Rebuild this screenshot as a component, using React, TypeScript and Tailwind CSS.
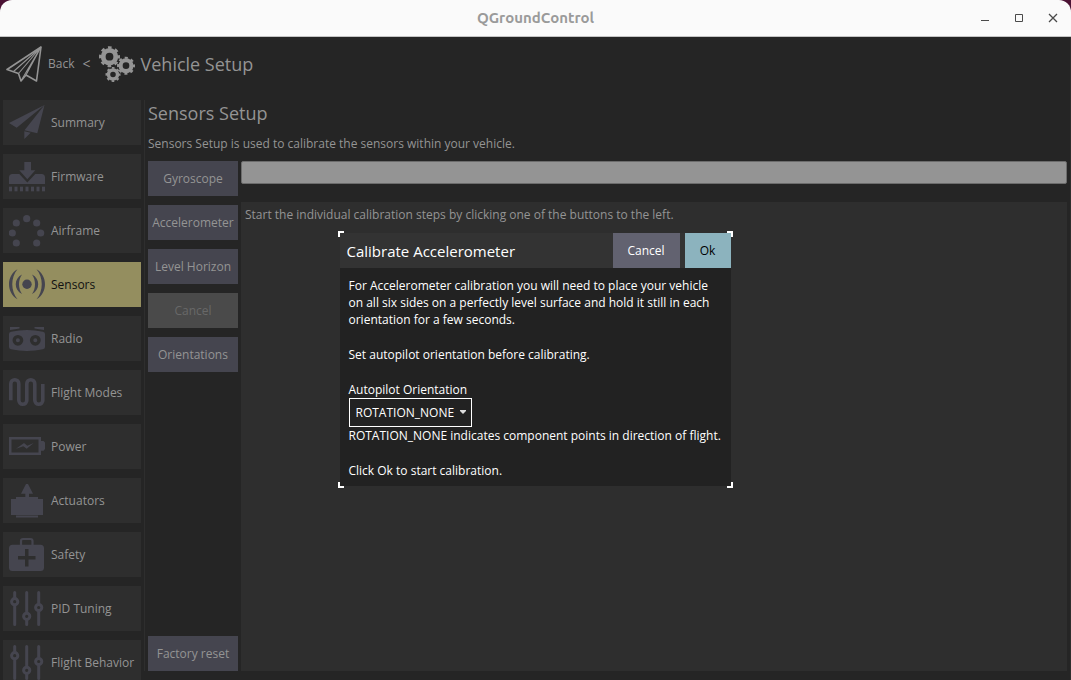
import type { ReactNode } from 'react'

const iconClass = 'mb-px h-9 w-9 shrink-0 text-[#45454f]'

function Icon({ children, className = iconClass }: { children: ReactNode; className?: string }) {
  return (
    <svg viewBox="0 0 36 36" className={className} fill="currentColor" aria-hidden="true">
      {children}
    </svg>
  )
}

const SummaryIcon = () => (
  <Icon>
    <path d="M35.5 1 0 19l7.7 4.7ZM35.5 1 15.5 26.300l12.800 3ZM15.300 27.300l6.400 1.500-6.400 6.200Z" />
  </Icon>
)

const FirmwareIcon = () => (
  <Icon>
    <path d="M15.3 4H22v8.300h4.300l-8 9-8-9h5Z" />
    <path d="M0 26v-6.500q0-3.500 3.500-3.500h6.800l8 8.500 8-8.500h6.200q3.500 0 3.500 3.500V26Z" />
    {[0, 5.5, 11, 16.5, 22, 27.5, 33].map((x) => (
      <rect key={x} x={x} y="28.7" width="3" height="4.6" />
    ))}
  </Icon>
)

const AirframeIcon = () => (
  <Icon>
    {[[17.7, 6.7], [7.3, 11], [27.7, 11], [3.3, 21], [31.7, 21], [7.3, 31], [27.7, 31]].map(([x, y]) => (
      <circle key={`${x}-${y}`} cx={x} cy={y} r="3.6" />
    ))}
  </Icon>
)

const SensorsIcon = () => (
  <Icon>
    <circle cx="18" cy="18.3" r="4.7" />
    <path d="M8.5 3.3C-2.8 9.5-2.8 27 8.5 33.3 1.5 25 1.5 11.5 8.5 3.3Z" />
    <path d="M27.5 3.3C38.8 9.5 38.8 27 27.5 33.3 34.5 25 34.5 11.5 27.5 3.3Z" />
    <path d="M13 8.5C4.700 12.500 4.700 24 13 28 9 22.500 9 14 13 8.500Z" />
    <path d="M23 8.5C31.300 12.500 31.300 24 23 28 27 22.500 27 14 23 8.500Z" />
  </Icon>
)

const RadioIcon = () => (
  <Icon>
    <path d="M1 7h9.500v1.500L1 10ZM35 7h-9.500v1.500L35 10Z" />
    <path d="M0 14q0-2 2-2.300 16-3.200 32 0 2 .3 2 2.300v13q0 2-2 2.300-16 3.200-32 0-2-.3-2-2.300Z" />
    <g className="fill-[#45454f] stroke-[#2e2e2e]" strokeWidth="3.4">
      <circle cx="8.9" cy="20.3" r="3.7" />
      <circle cx="26.3" cy="20.3" r="3.7" />
    </g>
  </Icon>
)

const FlightModesIcon = () => (
  <Icon>
    <path
      d="M1.8 26.300V9.700a4 4 0 0 1 8 0v16.600a4 4 0 0 0 8 0V9.700a4 4 0 0 1 8 0v16.600a4 4 0 0 0 8 0V10"
      fill="none"
      stroke="currentColor"
      strokeWidth="3.6"
    />
  </Icon>
)

const PowerIcon = () => (
  <Icon>
    <path d="M0 9h32v4h2.500l1.500 1.500v6.500l-1.500 1.700H32V27H0ZM2.500 11.500v13h27v-13Z" fillRule="evenodd" />
    <path d="m7 20.700 8-5.700 3.300 2.700 6.400-2.700-7 5.700-3.400-2.400Z" />
  </Icon>
)

const ActuatorsIcon = () => (
  <Icon>
    <path d="M17 2h2l5 9.700h-4V15h9v2h5v16H2V17h5v-2h9.300v-3.300H12Z" />
    <path d="M7 33.500h22v2H7Z" />
  </Icon>
)

const SafetyIcon = () => (
  <Icon>
    <path d="M12 9V5q0-2 2-2h7.500q2 0 2 2v4" fill="none" stroke="currentColor" strokeWidth="2.2" />
    <path
      d="M3.500 8.700h28q3.500 0 3.500 3.500V31.500q0 3.500-3.500 3.500h-28Q0 35 0 31.500V12.200q0-3.500 3.500-3.500ZM16 13v7H9v3.500h7v7h3.500v-7h7V20h-7v-7Z"
      fillRule="evenodd"
    />
  </Icon>
)

const TuningIcon = () => (
  <Icon>
    <g stroke="currentColor" strokeWidth="3" strokeLinecap="round">
      <path d="M5.700 2.500v32M17.700 2.500v32M29.700 2.500v32" />
      <g className="fill-[#2e2e2e]">
        <circle cx="5.7" cy="11.7" r="3.1" />
        <circle cx="17.7" cy="26.3" r="3.1" />
        <circle cx="29.7" cy="17.5" r="3.1" />
      </g>
    </g>
  </Icon>
)

function Gear({ cx, cy, r }: { cx: number; cy: number; r: number }) {
  const tooth = (Math.PI * 2 * r * 0.88) / 16
  return (
    <g fill="none" stroke="currentColor">
      <circle cx={cx} cy={cy} r={r * 0.6} strokeWidth={r * 0.46} />
      <circle
        cx={cx}
        cy={cy}
        r={r * 0.88}
        strokeWidth={r * 0.24}
        strokeDasharray={`${tooth} ${tooth}`}
        strokeDashoffset={tooth / 2}
      />
    </g>
  )
}

const sections = [
  { label: 'Summary', icon: SummaryIcon },
  { label: 'Firmware', icon: FirmwareIcon },
  { label: 'Airframe', icon: AirframeIcon },
  { label: 'Sensors', icon: SensorsIcon, active: true },
  { label: 'Radio', icon: RadioIcon },
  { label: 'Flight Modes', icon: FlightModesIcon },
  { label: 'Power', icon: PowerIcon },
  { label: 'Actuators', icon: ActuatorsIcon },
  { label: 'Safety', icon: SafetyIcon },
  { label: 'PID Tuning', icon: TuningIcon },
  { label: 'Flight Behavior', icon: TuningIcon },
]

const calibrations = [
  { label: 'Gyroscope' },
  { label: 'Accelerometer' },
  { label: 'Level Horizon' },
  { label: 'Cancel', disabled: true },
  { label: 'Orientations' },
]

function TitleBar() {
  return (
    <header className="grid h-[37px] shrink-0 grid-cols-[1fr_auto_1fr] items-center rounded-t-xl border-b border-[#c4c4c4] bg-[#fafafa]">
      <span />
      <h1 className="font-['Ubuntu','Noto_Sans',sans-serif] text-[15px] font-bold text-[#9a9a9a]">QGroundControl</h1>
      <div className="flex justify-end gap-[18px] pr-[10px] text-[#4a4a4a]">
        <button aria-label="Minimize" className="h-4 w-4">
          <svg viewBox="0 0 16 16" className="h-4 w-4" stroke="currentColor"><path d="M4 10.500h8" /></svg>
        </button>
        <button aria-label="Maximize" className="h-4 w-4">
          <svg viewBox="0 0 16 16" className="h-4 w-4" stroke="currentColor" fill="none"><path d="M4.500 4.500h7v7h-7z" /></svg>
        </button>
        <button aria-label="Close" className="h-4 w-4">
          <svg viewBox="0 0 16 16" className="h-4 w-4" stroke="currentColor" strokeWidth="1.3"><path d="m4 4 8 8M12 4l-8 8" /></svg>
        </button>
      </div>
    </header>
  )
}

function Toolbar() {
  return (
    <nav className="flex h-[54px] shrink-0 items-center pl-1.5">
      <button className="flex items-center gap-1.5 leading-[18px]">
        <Icon className="h-9 w-9 shrink-0">
          <g fill="none" stroke="currentColor" strokeWidth="1.6" strokeLinejoin="round">
            <path d="M35 1 1 23.500l11.500 4L15 35l5-6 10.500 6Z" />
            <path d="M35 1 12.500 27.500M35 1 15.500 34M35 1 20 29M35 1 7.500 25.500" strokeWidth="1.1" />
          </g>
        </Icon>
        Back
      </button>
      <span className="px-2 text-sm">&lt;</span>
      <Icon className="h-9 w-9 shrink-0">
        <Gear cx={10.5} cy={10.7} r={10.5} />
        <Gear cx={27} cy={19.7} r={9} />
        <Gear cx={14} cy={28.5} r={7.5} />
      </Icon>
      <h2 className="pl-1.5 text-lg">Vehicle Setup</h2>
    </nav>
  )
}

function CalibrateDialog() {
  return (
    <div className="absolute inset-0 flex items-center justify-center">
      <div role="dialog" aria-labelledby="dialog-title" className="relative mt-0.5 w-[391px] bg-[#222] text-white">
        <span className="absolute -top-0.5 -left-0.5 h-1.5 w-1.5 border-t-2 border-l-2 border-white" />
        <span className="absolute -top-0.5 -right-0.5 h-1.5 w-1.5 border-t-2 border-r-2 border-white" />
        <span className="absolute -bottom-0.5 -left-0.5 h-1.5 w-1.5 border-b-2 border-l-2 border-white" />
        <span className="absolute -right-0.5 -bottom-0.5 h-1.5 w-1.5 border-r-2 border-b-2 border-white" />
        <div className="relative flex h-[35px] items-center bg-[#333]">
          <h3 id="dialog-title" className="flex-1 pl-[7px] text-[15px]">Calibrate Accelerometer</h3>
          <button className="mr-[5px] h-full w-[67px] bg-[#626270]">Cancel</button>
          <button className="h-full w-[46px] bg-[#8cb3be] text-black">Ok</button>
        </div>
        <div className="flex flex-col gap-[18px] px-[9px] pt-[9px] pb-[7px] leading-[17px]">
          <p>
            For Accelerometer calibration you will need to place your vehicle on all six sides on a perfectly level
            surface and hold it still in each orientation for a few seconds.
          </p>
          <p>Set autopilot orientation before calibrating.</p>
          <div>
            <label htmlFor="orientation" className="block">Autopilot Orientation</label>
            <div className="relative w-[123px]">
              <select
                id="orientation"
                className="block h-[29px] w-full appearance-none border border-white bg-[#222] pl-1.5 text-white"
              >
                <option>ROTATION_NONE</option>
              </select>
              <svg viewBox="0 0 6 4" className="pointer-events-none absolute top-3 right-1.5 h-1 w-1.5" fill="#ddd">
                <path d="M0 0h6v1L3 4 0 1Z" />
              </svg>
            </div>
            <p>ROTATION_NONE indicates component points in direction of flight.</p>
          </div>
          <p>Click Ok to start calibration.</p>
        </div>
      </div>
    </div>
  )
}

export default function App() {
  return (
    <div className="h-screen bg-[#4b1234] font-['Open_Sans','Noto_Sans',sans-serif] text-xs">
      <div className="flex h-full flex-col">
        <TitleBar />
        <div className="relative flex min-h-0 flex-1 flex-col border-r border-[#2e2e2e] bg-[#252525] text-[#949494]">
          <Toolbar />
          <div className="flex min-h-0 flex-1 pt-[9px] pr-[3px] pl-[3px]">
            <aside className="flex w-[138px] shrink-0 flex-col gap-[9px] overflow-hidden">
              {sections.map(({ label, icon: SectionIcon, active }) => (
                <button
                  key={label}
                  className={`flex h-[45px] shrink-0 items-center gap-1.5 pl-1.5 whitespace-nowrap ${
                    active ? 'bg-[#948e5f] text-[#111]' : 'bg-[#2e2e2e]'
                  }`}
                >
                  <SectionIcon />
                  {label}
                </button>
              ))}
            </aside>

            <main className="mb-[9px] ml-[3px] flex min-w-0 flex-1 flex-col border-l border-[#2e2e2e] pl-[3px]">
              <h2 className="text-lg leading-[26px]">Sensors Setup</h2>
              <p className="pt-2 pb-1.5 leading-5">Sensors Setup is used to calibrate the sensors within your vehicle.</p>
              <div className="flex min-h-0 flex-1 gap-[3px] pt-px">
                <div className="flex w-[90px] shrink-0 flex-col gap-[9px]">
                  {calibrations.map(({ label, disabled }) => (
                    <button
                      key={label}
                      disabled={disabled}
                      className={`h-[35px] whitespace-nowrap ${disabled ? 'bg-[#4a4a4a] text-[#686868]' : 'bg-[#45454f]'}`}
                    >
                      {label}
                    </button>
                  ))}
                  <button className="mt-auto h-[35px] bg-[#45454f]">Factory reset</button>
                </div>
                <div className="flex min-w-0 flex-1 flex-col gap-[18px]">
                  <div
                    role="progressbar"
                    aria-label="Calibration progress"
                    className="h-[23px] shrink-0 rounded-xs border border-[#6c6c6c] bg-[#949494]"
                  />
                  <p className="flex-1 bg-[#2e2e2e] px-1 py-[3px] leading-5">
                    Start the individual calibration steps by clicking one of the buttons to the left.
                  </p>
                </div>
              </div>
            </main>
          </div>
          <CalibrateDialog />
        </div>
      </div>
    </div>
  )
}
